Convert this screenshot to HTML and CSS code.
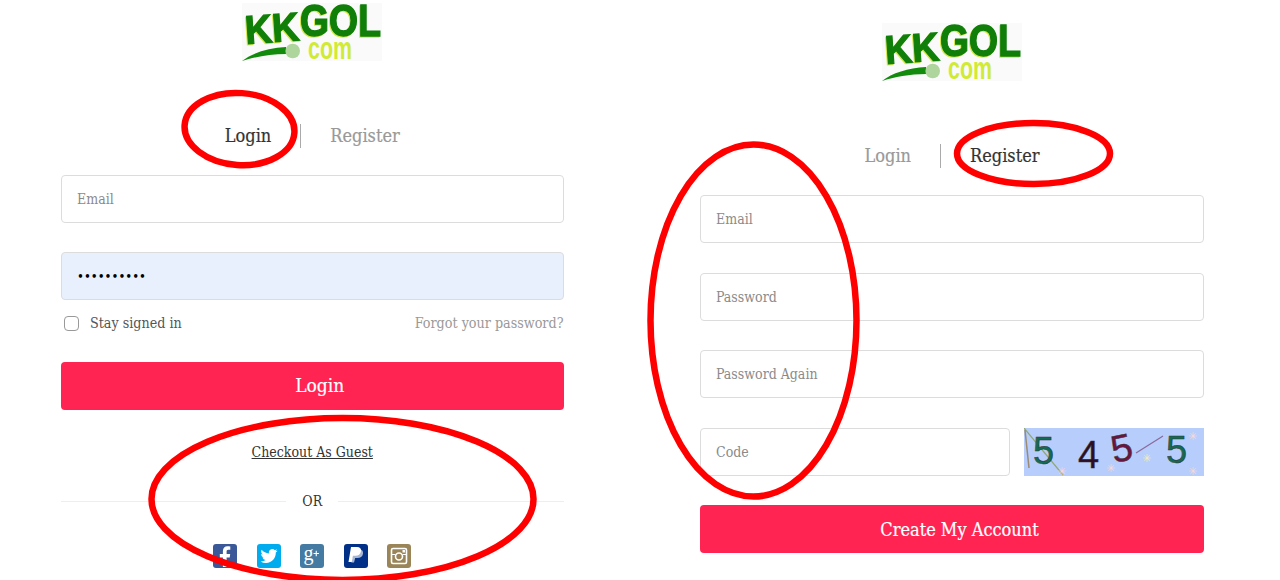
FILE: index.html
```html
<!DOCTYPE html>
<html lang="en">
<head>
    <meta charset="UTF-8">
    <meta name="viewport" content="width=device-width, initial-scale=1.0">
    <title>Login and Register</title>
    <link rel="stylesheet" href="styles.css">
</head>
<body>
    <div class="page">
        <section class="panel panel-login">
            <svg class="logo" viewBox="0 0 140 58">
                <rect width="140" height="58" fill="#fafafa"/>
                <g class="logo-word">
                    <text x="4" y="41" font-size="40" textLength="54" lengthAdjust="spacingAndGlyphs" transform="rotate(-4 4 41)">KK</text>
                    <text x="58" y="33" font-size="44" textLength="81" lengthAdjust="spacingAndGlyphs">GOL</text>
                </g>
                <text class="logo-com" x="66" y="56" font-size="32" textLength="44" lengthAdjust="spacingAndGlyphs">com</text>
                <path d="M0 58 C10 50 26 45 44 44 L44 51 C28 51 12 54 0 58Z" fill="#128a0c"/>
                <circle cx="50.7" cy="48" r="7.3" fill="#aed59c"/>
            </svg>
            <nav class="tabs">
                <span class="tab active">Login</span>
                <span class="tab">Register</span>
            </nav>
            <form class="form">
                <input class="field" type="text" placeholder="Email">
                <input class="field field-filled" type="password" value="1234567890">
            </form>
            <div class="options">
                <label class="stay"><input class="check" type="checkbox"> Stay signed in</label>
                <span class="forgot">Forgot your password?</span>
            </div>
            <button class="submit submit-login" type="button">Login</button>
            <a class="guest" href="#">Checkout As Guest</a>
            <div class="or">OR</div>
            <div class="socials">
                <svg class="social" viewBox="0 0 24 24"><rect width="24" height="24" rx="3" fill="#3b5998"/><path d="M13.6 23V13.6h3.1l.5-3.7h-3.600V7.600c0-1.100.4-1.800 1.800-1.800H17.300V2.400c-.4 0-1.500-.2-2.800-.2-2.700 0-4.600 1.700-4.600 4.700v3H6.800v3.700h3.100V23z" fill="#fff"/></svg>
                <svg class="social" viewBox="0 0 24 24"><rect width="24" height="24" rx="3" fill="#00aced"/><path transform="translate(3.500 3.500) scale(.71)" d="M23.953 4.57a10 10 0 01-2.825.775 4.958 4.958 0 002.163-2.723c-.951.555-2.005.959-3.127 1.184a4.92 4.92 0 00-8.384 4.482C7.69 8.095 4.067 6.13 1.64 3.162a4.822 4.822 0 00-.666 2.475c0 1.71.87 3.213 2.188 4.096a4.904 4.904 0 01-2.228-.616v.06a4.923 4.923 0 003.946 4.827 4.996 4.996 0 01-2.212.085 4.936 4.936 0 004.604 3.417 9.867 9.867 0 01-6.102 2.105c-.39 0-.779-.023-1.17-.067a13.995 13.995 0 007.557 2.209c9.053 0 13.998-7.496 13.998-13.985 0-.21 0-.42-.015-.63A9.935 9.935 0 0024 4.59z" fill="#fff"/></svg>
                <svg class="social" viewBox="0 0 24 24"><rect width="24" height="24" rx="3" fill="#457ba3"/><text x="3.500" y="16" font-family="Liberation Serif" font-size="20" fill="#fff">g</text><path d="M13.500 9.500h5.500M16.250 6.800v5.400" stroke="#fff" stroke-width="1.100" fill="none"/></svg>
                <svg class="social" viewBox="0 0 24 24"><rect width="24" height="24" rx="3" fill="#003087"/><path d="M9.500 5.500h5.500c3 0 4.500 1.500 4 4.200-.5 3-2.700 4.300-5.500 4.300h-2.300L10 18.500H7.300z" fill="#fff" opacity=".65"/><path d="M7 3h6c3 0 4.500 1.600 4 4.300-.5 3-2.700 4.500-5.500 4.500H9L7.800 18H4.500z" fill="#fff"/></svg>
                <svg class="social" viewBox="0 0 24 24"><rect width="24" height="24" rx="3" fill="#9a8559"/><rect x="4.500" y="4.500" width="15" height="15" rx="1.500" fill="none" stroke="#fff" stroke-width="1.600"/><circle cx="12" cy="12.500" r="3.500" fill="none" stroke="#fff" stroke-width="1.600"/><path d="M4.500 10.500h4M15.500 10.500h4" stroke="#fff" stroke-width="1.200"/><rect x="15.500" y="6" width="2.500" height="2.500" fill="#fff"/></svg>
            </div>
        </section>

        <section class="panel panel-register">
            <svg class="logo" viewBox="0 0 140 58">
                <rect width="140" height="58" fill="#fafafa"/>
                <g class="logo-word">
                    <text x="4" y="41" font-size="40" textLength="54" lengthAdjust="spacingAndGlyphs" transform="rotate(-4 4 41)">KK</text>
                    <text x="58" y="33" font-size="44" textLength="81" lengthAdjust="spacingAndGlyphs">GOL</text>
                </g>
                <text class="logo-com" x="66" y="56" font-size="32" textLength="44" lengthAdjust="spacingAndGlyphs">com</text>
                <path d="M0 58 C10 50 26 45 44 44 L44 51 C28 51 12 54 0 58Z" fill="#128a0c"/>
                <circle cx="50.700" cy="48" r="7.300" fill="#aed59c"/>
            </svg>
            <nav class="tabs">
                <span class="tab">Login</span>
                <span class="tab active">Register</span>
            </nav>
            <form class="form form-register">
                <input class="field" type="text" placeholder="Email">
                <input class="field" type="password" placeholder="Password">
                <input class="field" type="password" placeholder="Password Again">
                <div class="code-row">
                    <input class="field field-code" type="text" placeholder="Code">
                    <svg class="captcha" viewBox="0 0 180 48">
                        <rect width="180" height="48" fill="#b7cdfb"/>
                        <path d="M0 0 L39 47" stroke="#8fa878" stroke-width="1.200" fill="none"/>
                        <path d="M1 2 L5 40" stroke="#9b8b70" stroke-width="1.500" fill="none"/>
                        <path d="M112 25 L139 8" stroke="#8a6a9a" stroke-width="1.200" fill="none"/>
                        <g fill="#f8d8d8" font-family="DejaVu Sans" font-size="11">
                            <text x="33" y="47">✳</text>
                            <text x="82" y="44">✳</text>
                            <text x="118" y="34" fill="#f4ecc0">✳</text>
                            <text x="164" y="12">✳</text>
                            <text x="164" y="47">✳</text>
                        </g>
                        <g class="captcha-digits">
                            <text x="9" y="36" fill="#136b52">5</text>
                            <text x="54" y="40" fill="#2c0f24">4</text>
                            <text x="88" y="33" fill="#6d1342" transform="rotate(-12 98 25)">5</text>
                            <text x="142" y="35" fill="#136b52">5</text>
                        </g>
                    </svg>
                </div>
            </form>
            <button class="submit submit-register" type="button">Create My Account</button>
        </section>
    </div>

    <svg class="marks" viewBox="0 0 1280 580">
        <ellipse cx="239.500" cy="129" rx="55" ry="36" transform="rotate(4 239 129)"/>
        <ellipse cx="342.500" cy="499" rx="191" ry="81"/>
        <ellipse cx="753.500" cy="320.500" rx="103" ry="176"/>
        <ellipse cx="1033.500" cy="153.500" rx="76.500" ry="30.500"/>
    </svg>
</body>
</html>
```

FILE: styles.css
```css
* {
    box-sizing: border-box;
}

body {
    margin: 0;
    height: 580px;
    overflow: hidden;
    position: relative;
    background-color: white;
    font-family: 'DejaVu Serif Condensed', 'DejaVu Serif', serif;
    color: #333;
}

.page {
    display: flex;
    gap: 136.5px;
    padding-left: 61px;
}

.panel {
    display: flex;
    flex-direction: column;
    width: 502.5px;
    padding-top: 3px;
}

.panel-register {
    width: 504px;
    padding-top: 23px;
}

.logo {
    display: block;
    width: 140px;
    height: 58px;
    margin: 0 auto;
    overflow: visible;
}

.logo text {
    font-family: 'Liberation Sans', sans-serif;
    font-weight: 700;
}

.logo-word {
    fill: #0f7f0a;
    stroke: #0f7f0a;
    stroke-width: 1.3;
    filter: drop-shadow(-1px 1px 0 #d4e84a);
}

.logo-com {
    fill: #d0ea36;
}

.tabs {
    display: flex;
    justify-content: center;
    margin-top: 63px;
    height: 24px;
}

.tab {
    font-size: 18px;
    line-height: 24px;
    color: #999;
    padding: 0 29px;
    -webkit-text-stroke: 0.2px;
}

.tab:first-child {
    border-right: 1px solid #aaa;
}

.tab.active {
    color: #333;
}

.form {
    display: flex;
    flex-direction: column;
    gap: 29px;
    margin-top: 27px;
}

.form-register {
    gap: 29.6px;
}

.field {
    width: 100%;
    height: 48px;
    padding: 0 15px;
    border: 1px solid #dcdcdc;
    border-radius: 4px;
    background-color: white;
    font-family: inherit;
    font-size: 14px;
    color: #000;
    outline: none;
}

.field::placeholder {
    color: #8a8a8a;
    opacity: 1;
}

.field-filled {
    background-color: #e8f0fe;
    font-size: 13px;
}

.options {
    display: flex;
    justify-content: space-between;
    align-items: center;
    height: 20px;
    margin-top: 13px;
    font-size: 14.2px;
}

.stay {
    display: flex;
    align-items: center;
    gap: 11px;
    padding-left: 3px;
    color: #555;
}

.check {
    appearance: none;
    width: 15px;
    height: 15px;
    margin: 0;
    border: 1.5px solid #999;
    border-radius: 4px;
}

.forgot {
    color: #999;
}

.submit {
    height: 48px;
    border: none;
    border-radius: 4px;
    background-color: #ff2452;
    color: white;
    font-family: inherit;
    font-size: 18px;
    -webkit-text-stroke: 0.2px;
}

.submit-login {
    margin-top: 29px;
    padding: 0 0 2px 15px;
    font-size: 19px;
}

.submit-register {
    margin-top: 29px;
    padding: 2px 0 0 15px;
}

.guest {
    align-self: center;
    margin-top: 32px;
    font-size: 14px;
    line-height: 20px;
    color: #333;
}

.or {
    display: flex;
    align-items: center;
    gap: 16px;
    height: 20px;
    margin-top: 29px;
    font-size: 14px;
}

.or::before,
.or::after {
    content: "";
    flex: 1;
    border-top: 1px solid #eee;
}

.socials {
    display: flex;
    justify-content: center;
    gap: 19.6px;
    margin-top: 33px;
}

.social {
    width: 24px;
    height: 24px;
    overflow: visible;
}

.code-row {
    display: flex;
    gap: 14px;
}

.field-code {
    width: 310px;
}

.captcha {
    width: 180px;
    height: 48px;
}

.captcha-digits {
    font-family: 'Liberation Sans', sans-serif;
    font-size: 38px;
    stroke: currentColor;
    stroke-width: 0.5;
}

.marks {
    position: absolute;
    left: 0;
    top: 0;
    width: 1280px;
    height: 580px;
    pointer-events: none;
}

.marks ellipse {
    fill: none;
    stroke: #f00;
    stroke-width: 6.5;
}
```
